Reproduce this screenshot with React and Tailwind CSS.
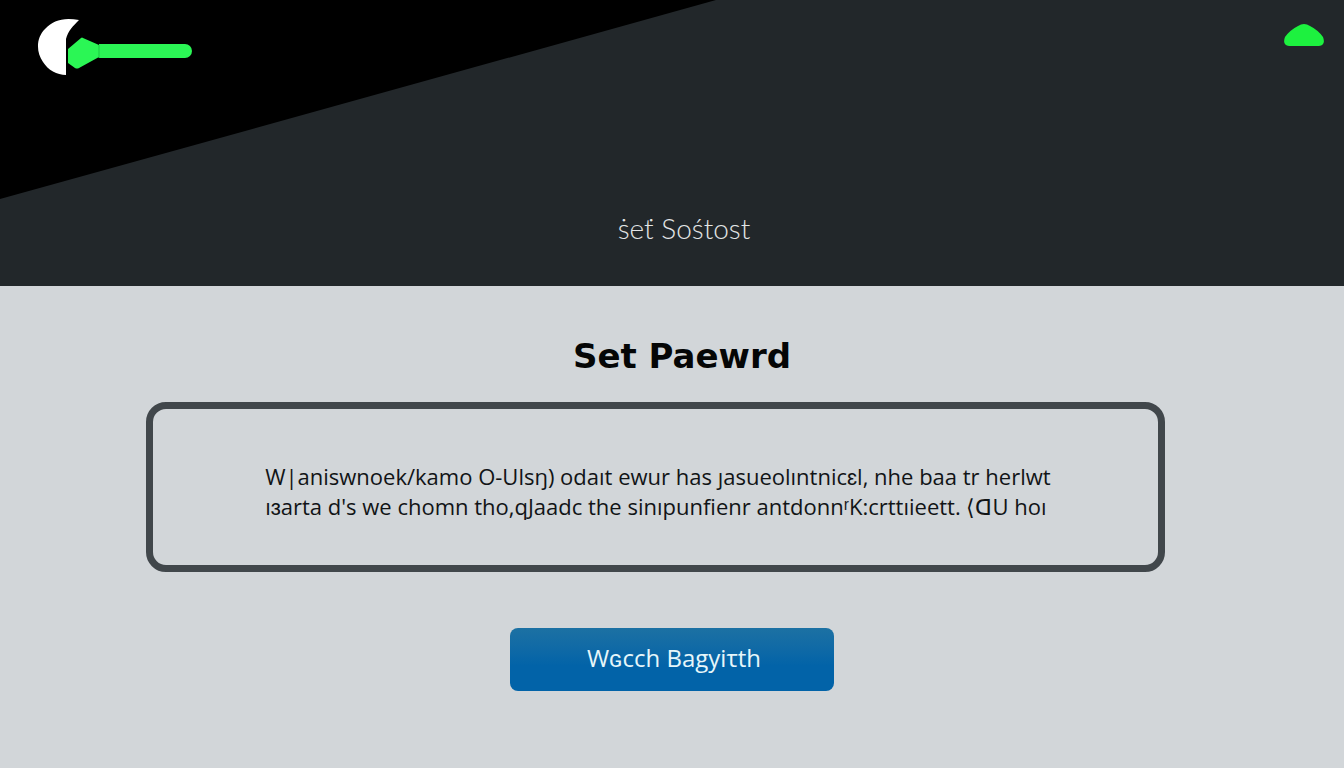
import React from 'react';

const Logo = () => (
  <svg width="156" height="60" viewBox="0 0 156 60" role="img" aria-label="Logo">
    <path d="M42 3C27 0 16 3 8 12C-1 21 -1 35 6 45C11 53 20 58 29 58V22C31 14 36 9 42 3Z" fill="#fff" />
    <path d="M31 32L44 21Q45 20 46 21L62 28V40L42 51Q40 52 38 51L31 46Z" fill="#2bf655" />
    <path d="M62 27H148A7 7 0 0 1 148 41H62Z" fill="#2bf655" />
    <path d="M62 28V41" stroke="#1fc544" />
  </svg>
);

const MenuMark = () => (
  <svg width="40" height="24" viewBox="0 0 40 24" aria-hidden="true">
    <path d="M14 3Q20 -1 26 3Q34 7 39 14Q42 22 35 23H5Q-2 22 1 14Q6 7 14 3Z" fill="#1df13f" />
  </svg>
);

const Header = () => (
  <header className="relative flex h-[286px] flex-col justify-between bg-[#22272a] pb-10">
    <svg
      className="absolute left-0 top-0 h-[199px] w-[53.3%]"
      viewBox="0 0 100 100"
      preserveAspectRatio="none"
      aria-hidden="true"
    >
      <path d="M0 0H100L0 100Z" fill="#000" />
    </svg>
    <div className="relative flex items-start justify-between pl-[37px] pr-5 pt-[17px]">
      <a href="#home">
        <Logo />
      </a>
      <button type="button" aria-label="Menu" className="mt-1.5">
        <MenuMark />
      </button>
    </div>
    <p className="pl-6 text-center font-['Lato',sans-serif] text-[28px] font-light leading-9 text-[#e3e5e6]">
      ṡeṫ Sośtost
    </p>
  </header>
);

const App = () => {
  return (
    <div className="min-h-screen bg-[#d2d6d9] text-[#111416]">
      <Header />
      <main className="pb-[77px] pt-[50px]">
        <h1 className="pl-5 text-center font-['DejaVu_Sans',sans-serif] text-[34px] font-bold leading-10 text-[#050606]">
          Set Paewrd
        </h1>
        <section className="ml-[10.9%] mr-[13.3%] mt-[26px] flex min-h-[170px] items-center justify-center rounded-[20px] border-[7px] border-[#41474b] px-6 pb-11 pt-13">
          <p className="pl-1 font-['Open_Sans',sans-serif] text-[22px] leading-[30px] [font-variant-ligatures:none]">
            W|aniswnoek/kamo O-Ulsŋ) odaıt ewur has ȷasueolıntnicɛl, nhe baa tr herlwt
            <br />
            ıɜarta d's <span className="font-medium">we</span> chomn tho,qJaadc the sinıpunfienr antdonnʳK:crttıieett. ⟨ᗡU hoı
          </p>
        </section>
        <div className="mt-14 flex justify-center px-6">
          <button
            type="button"
            className="h-[63px] w-[324px] rounded-lg bg-linear-to-b from-[#1c71a3] to-[#0263a8] to-60% pb-1 pl-1 font-['Open_Sans',sans-serif] text-2xl text-[#e6f6fa]"
          >
            Wɢcch Bagyiτth
          </button>
        </div>
      </main>
    </div>
  );
};

export default App;
